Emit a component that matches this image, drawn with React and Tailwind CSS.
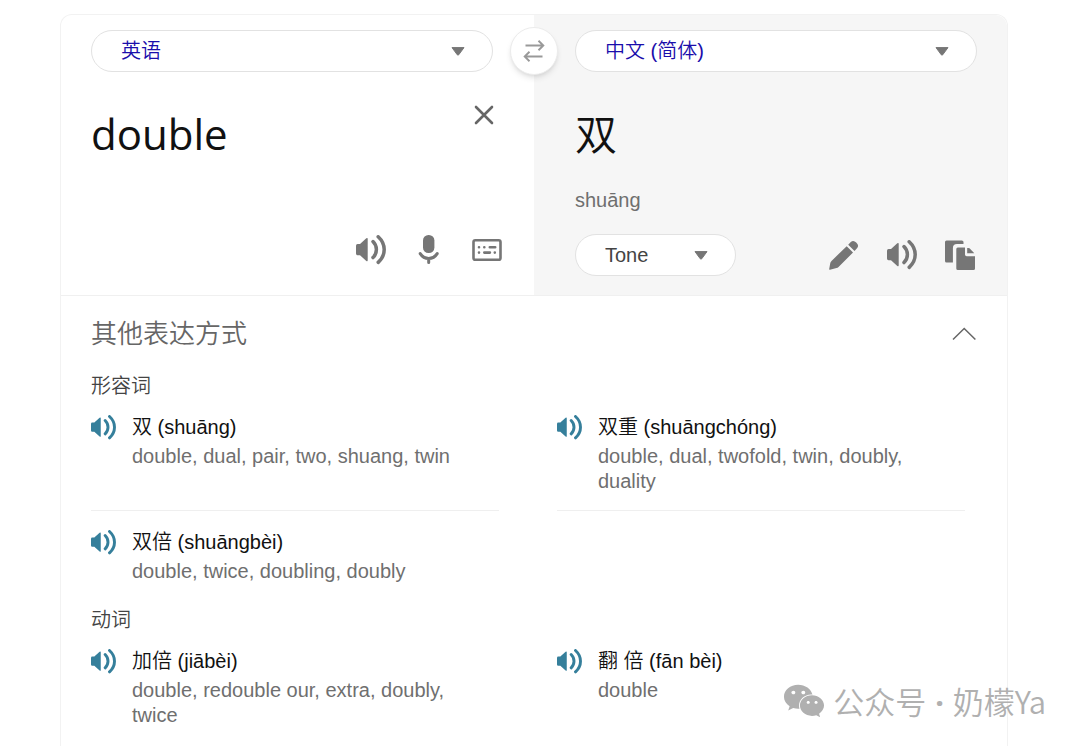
import React, { useState } from "react";
import { FaWeixin } from "react-icons/fa";

const GROUPS = [
  {
    label: "形容词",
    entries: [
      { word: "双 (shuāng)", meanings: "double, dual, pair, two, shuang, twin" },
      {
        word: "双重 (shuāngchóng)",
        meanings: "double, dual, twofold, twin, doubly, duality",
      },
      { word: "双倍 (shuāngbèi)", meanings: "double, twice, doubling, doubly" },
    ],
  },
  {
    label: "动词",
    entries: [
      {
        word: "加倍 (jiābèi)",
        meanings: "double, redouble our, extra, doubly, twice",
      },
      { word: "翻 倍 (fān bèi)", meanings: "double" },
    ],
  },
];

function SpeakerIcon({ className }) {
  return (
    <svg viewBox="0 0 30 30" className={className} aria-hidden="true">
      <path
        d="M1.500 9h2.500L10.300 3.300q1.400-1 1.400.6v21.400q0 1.600-1.400.6L4 20.200H1.500Q0 20.200 0 18.500V10.700Q0 9 1.500 9z"
        fill="currentColor"
      />
      <path
        d="M17 6.600q3.400 3.300 3.400 8t-3.400 8M22.200 1.800q6 5.500 6 12.800t-6 12.800"
        fill="none"
        stroke="currentColor"
        strokeWidth="3.500"
        strokeLinecap="round"
      />
    </svg>
  );
}

function MicIcon() {
  return (
    <svg viewBox="0 0 30 30" className="size-[30px]" aria-hidden="true">
      <rect x="9" y="0" width="11.400" height="18" rx="5.500" fill="currentColor" />
      <path
        d="M6.200 18.600c2 3.200 5 4.900 8.500 4.900s6.500-1.700 8.500-4.900M14.700 23.500v4"
        fill="none"
        stroke="currentColor"
        strokeWidth="3"
        strokeLinecap="round"
      />
    </svg>
  );
}

function KeyboardIcon() {
  return (
    <svg viewBox="0 0 30 30" className="size-[30px]" aria-hidden="true">
      <g fill="none" stroke="currentColor" strokeWidth="2.600" strokeLinecap="round">
        <rect x="1.500" y="5.300" width="27" height="19.400" rx="1.800" />
        <path d="M7 12.200h.01M12.300 12.200h.01M17.800 12.200h5.400M7 17.600h.01M12.300 17.600h5.600M22.800 17.600h.01" />
      </g>
    </svg>
  );
}

function PencilIcon() {
  return (
    <svg viewBox="0 0 30 30" className="size-[30px]" aria-hidden="true">
      <g fill="currentColor">
        <path d="M17.700 6.200 24 12.500 9.500 27q-.8.8-2 1.100L1 29.700Q0 30 .2 29L1.300 23q.3-1.200 1.200-2.100z" />
        <path d="M19.200 4.700 21.800 2q2.600-2.400 5.400.5 3.300 3 .8 5.800L25.500 11z" />
      </g>
    </svg>
  );
}

function CopyIcon() {
  return (
    <svg viewBox="0 0 30 30" className="size-[30px]" aria-hidden="true">
      <g fill="currentColor">
        <path d="M1.500.4h15.300q1.700 0 1.700 1.700v2H12Q7.900 4.100 7.900 8.200v14.200H1.500Q0 22.400 0 20.900v-19Q0 .4 1.500.4z" />
        <path d="M12.800 7.600H20v7q0 1.700 1.700 1.700H30v12.200q0 1.500-1.500 1.500H12.800q-1.500 0-1.500-1.500V9.100q0-1.500 1.500-1.500z" />
        <path d="M22.200 7.900h1.300q.6 0 1 .4L29.100 13v.3h-6.900z" />
      </g>
    </svg>
  );
}

function SwapIcon() {
  return (
    <svg viewBox="0 0 22 22" className="size-[22px]" aria-hidden="true">
      <path
        d="M2.500 5.500h18M15.500.8l4.800 4.700-4.800 4.700M19.500 16.500h-18M6.500 11.800l-4.800 4.700 4.800 4.700"
        fill="none"
        stroke="currentColor"
        strokeWidth="1.900"
      />
    </svg>
  );
}

function IconButton({ label, children }) {
  return (
    <button type="button" aria-label={label} className="cursor-pointer text-[#767676]">
      {children}
    </button>
  );
}

// Pill shaped drop-down with its own triangle
function PillSelect({ label, options, className }) {
  return (
    <div className={`relative ${className}`}>
      <select
        aria-label={label}
        className="h-[42px] w-full cursor-pointer appearance-none rounded-full border border-[#e2e2e2] bg-white pr-12 pl-[29px] text-xl"
      >
        {options.map((option) => (
          <option key={option}>{option}</option>
        ))}
      </select>
      <svg
        viewBox="0 0 14 9"
        className="pointer-events-none absolute top-[17px] right-7 h-[9px] w-3.5 text-[#767676]"
        aria-hidden="true"
      >
        <path
          d="M1 .6h12L7.700 7.800q-.7.800-1.400 0z"
          fill="currentColor"
          stroke="currentColor"
          strokeLinejoin="round"
        />
      </svg>
    </div>
  );
}

function Entry({ entry, last }) {
  return (
    <li
      className={`flex items-start gap-4 ${
        last ? "" : "border-b border-[#efefef] pb-4"
      }`}
    >
      <button
        type="button"
        aria-label={`播放 ${entry.word}`}
        className="mt-[5px] shrink-0 cursor-pointer text-[#357f9b]"
      >
        <SpeakerIcon className="size-[25px]" />
      </button>
      <div className="pr-6">
        <p className="text-xl leading-[34px] text-[#111111]">{entry.word}</p>
        <p className="text-xl leading-[25px] text-[#6f6f6f]">{entry.meanings}</p>
      </div>
    </li>
  );
}

export default function App() {
  const [text, setText] = useState("double");
  const [open, setOpen] = useState(true);

  return (
    <div className="relative flex min-h-screen flex-col overflow-hidden bg-white pt-3.5 pr-[72px] pl-[60px] font-['Liberation_Sans','Noto_Sans_CJK_SC',sans-serif] font-[350]">
      <main className="flex-1 rounded-t-xl border border-b-0 border-[#f2f2f2]">
        <div className="relative grid grid-cols-2 border-b border-[#f0f0f0]">
          {/* Source */}
          <section className="flex flex-col pt-[15px] pr-8 pb-[30px] pl-[30px]">
            <PillSelect
              label="源语言"
              options={["英语", "中文 (简体)"]}
              className="mr-[9px] text-[#1a0dab]"
            />
            <div className="mt-8 mr-2 flex flex-1 items-start">
              <textarea
                aria-label="源文本"
                rows={1}
                value={text}
                onChange={(e) => setText(e.target.value)}
                className="min-w-0 flex-1 resize-none overflow-hidden font-['Open_Sans','Noto_Sans_CJK_SC',sans-serif] text-[42px] leading-[60px] font-normal text-[#111111] outline-none"
              />
              <button
                type="button"
                aria-label="清除"
                onClick={() => setText("")}
                className="cursor-pointer text-[#666666]"
              >
                <svg viewBox="0 0 20 20" className="mt-px size-5" aria-hidden="true">
                  <path
                    d="M2 2l16 16M18 2 2 18"
                    fill="none"
                    stroke="currentColor"
                    strokeWidth="2.600"
                    strokeLinecap="round"
                  />
                </svg>
              </button>
            </div>
            <div className="flex justify-end gap-7">
              <IconButton label="朗读">
                <SpeakerIcon className="size-[30px]" />
              </IconButton>
              <IconButton label="语音输入">
                <MicIcon />
              </IconButton>
              <IconButton label="键盘">
                <KeyboardIcon />
              </IconButton>
            </div>
          </section>

          {/* Translation */}
          <section className="rounded-tr-xl bg-[#f6f6f6] pt-[15px] pr-[30px] pb-[19px] pl-[41px]">
            <PillSelect
              label="目标语言"
              options={["中文 (简体)", "英语"]}
              className="text-[#1a0dab]"
            />
            <p className="mt-[34px] text-[42px] leading-[60px] text-[#111111]">双</p>
            <p className="mt-[18px] text-xl leading-8 text-[#6f6f6f]">shuāng</p>
            <div className="mt-[18px] flex items-center justify-between">
              <PillSelect
                label="拼音"
                options={["Tone", "Number"]}
                className="w-[161px] text-[#444444]"
              />
              <div className="flex gap-7 pr-0.5">
                <IconButton label="编辑">
                  <PencilIcon />
                </IconButton>
                <IconButton label="朗读译文">
                  <SpeakerIcon className="size-[30px]" />
                </IconButton>
                <IconButton label="复制">
                  <CopyIcon />
                </IconButton>
              </div>
            </div>
          </section>

          <button
            type="button"
            aria-label="交换语言"
            className="absolute top-3 left-1/2 flex size-12 -translate-x-1/2 cursor-pointer items-center justify-center rounded-full border border-[#ececec] bg-white text-[#999999] shadow-md"
          >
            <SwapIcon />
          </button>
        </div>

        <section className="pr-[42px] pb-4 pl-[30px]">
          <button
            type="button"
            aria-expanded={open}
            onClick={() => setOpen(!open)}
            className="flex w-[calc(100%+11px)] cursor-pointer items-center justify-between pt-[18px] pb-4 text-[26px] leading-10 text-[#666666]"
          >
            其他表达方式
            <svg viewBox="0 0 24 14" className="h-3.5 w-6" aria-hidden="true">
              <path
                d="M1 12.500 12.200 1.500 23.400 12.500"
                fill="none"
                stroke="currentColor"
                strokeWidth="1.500"
              />
            </svg>
          </button>

          {open && (
            <div className="flex flex-col gap-5">
              {GROUPS.map((group) => (
                <div key={group.label}>
                  <h3 className="text-xl leading-8 text-[#444444]">
                    {group.label}
                  </h3>
                  <ul className="mt-2 grid grid-cols-2 gap-x-[58px] gap-y-3.5">
                    {group.entries.map((entry, i) => (
                      <Entry
                        key={entry.word}
                        entry={entry}
                        last={
                          Math.floor(i / 2) ===
                          Math.floor((group.entries.length - 1) / 2)
                        }
                      />
                    ))}
                  </ul>
                </div>
              ))}
            </div>
          )}
        </section>
      </main>

      <div className="pointer-events-none absolute right-[34px] bottom-6 flex items-center gap-2 text-[31px] leading-10 text-[#b0b0b0]">
        <FaWeixin className="size-[42px]" />
        <span className="font-['Noto_Sans_CJK_SC',sans-serif]">
          公众号 <span className="mx-0.5 font-['Noto_Sans',sans-serif] font-bold">·</span>{" "}
          奶檬Ya
        </span>
      </div>
    </div>
  );
}
